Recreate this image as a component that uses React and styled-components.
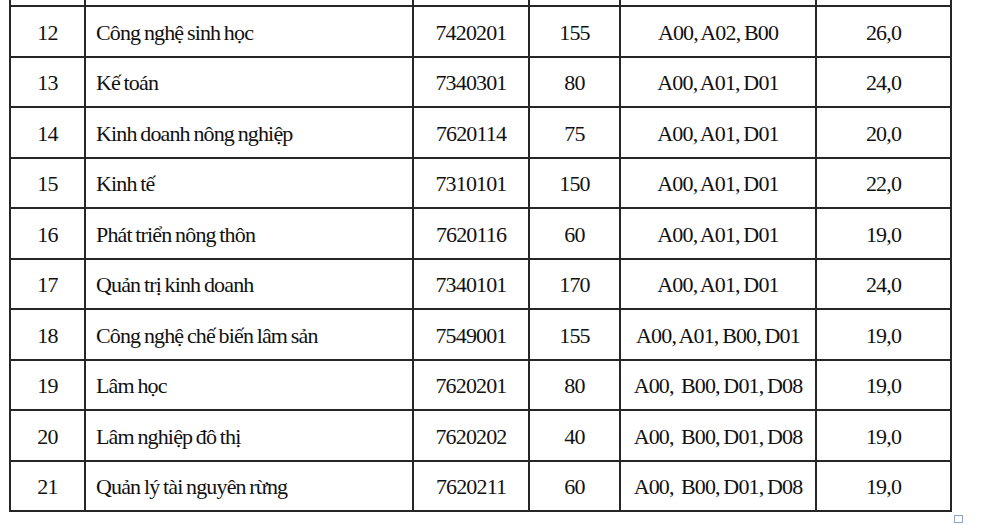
import React from 'react'
import styled, { createGlobalStyle } from 'styled-components'

const GlobalStyle = createGlobalStyle`
  html, body {
    margin: 0;
    padding: 0;
    background: #fff;
  }
  body {
    width: 990px;
    height: 525px;
    overflow: hidden;
    font-family: "Liberation Serif", "Times New Roman", serif;
    color: #111;
  }
`;

const Page = styled.div`
  position: relative;
  width: 990px;
  height: 525px;
  padding-left: 9px;
  box-sizing: border-box;
`;

const Table = styled.table`
  border-collapse: collapse;
  table-layout: fixed;
  width: 941px;
`;

const Row = styled.tr`
  height: ${p => (p.$cut ? '6px' : '50.5px')};
`;

const Cell = styled.td`
  border: 2px solid #262626;
  border-top: ${p => (p.$cut ? 'none' : '2px solid #262626')};
  padding: ${p => (p.$left ? '3px 0 0 10px' : '3px 0 0')};
  text-align: ${p => (p.$left ? 'left' : 'center')};
  font-size: 22px;
  letter-spacing: -0.85px;
  word-spacing: -1px;
  line-height: 1;
  white-space: pre;
  vertical-align: middle;
`;

const Handle = styled.div`
  position: absolute;
  left: 954px;
  top: 515px;
  width: 7px;
  height: 6px;
  border: 1px solid #8ea3c8;
  background: #fff;
`;

const widths = [75, 328, 116, 91, 196, 135];

const rows = [
  ['12', 'Công nghệ sinh học', '7420201', '155', 'A00, A02, B00', '26,0'],
  ['13', 'Kế toán', '7340301', '80', 'A00, A01, D01', '24,0'],
  ['14', 'Kinh doanh nông nghiệp', '7620114', '75', 'A00, A01, D01', '20,0'],
  ['15', 'Kinh tế', '7310101', '150', 'A00, A01, D01', '22,0'],
  ['16', 'Phát triển nông thôn', '7620116', '60', 'A00, A01, D01', '19,0'],
  ['17', 'Quản trị kinh doanh', '7340101', '170', 'A00, A01, D01', '24,0'],
  ['18', 'Công nghệ chế biến lâm sản', '7549001', '155', 'A00, A01, B00, D01', '19,0'],
  ['19', 'Lâm học', '7620201', '80', 'A00,  B00, D01, D08', '19,0'],
  ['20', 'Lâm nghiệp đô thị', '7620202', '40', 'A00,  B00, D01, D08', '19,0'],
  ['21', 'Quản lý tài nguyên rừng', '7620211', '60', 'A00,  B00, D01, D08', '19,0'],
];

export default function App() {
  return (
    <>
      <GlobalStyle />
      <Page>
        <Table>
          <colgroup>
            {widths.map((w, i) => (
              <col key={i} style={{ width: w }} />
            ))}
          </colgroup>
          <tbody>
            <Row $cut>
              {widths.map((w, i) => (
                <Cell key={i} $cut />
              ))}
            </Row>
            {rows.map(r => (
              <Row key={r[0]}>
                {r.map((v, i) => (
                  <Cell key={i} $left={i === 1}>{v}</Cell>
                ))}
              </Row>
            ))}
          </tbody>
        </Table>
        <Handle />
      </Page>
    </>
  )
}
